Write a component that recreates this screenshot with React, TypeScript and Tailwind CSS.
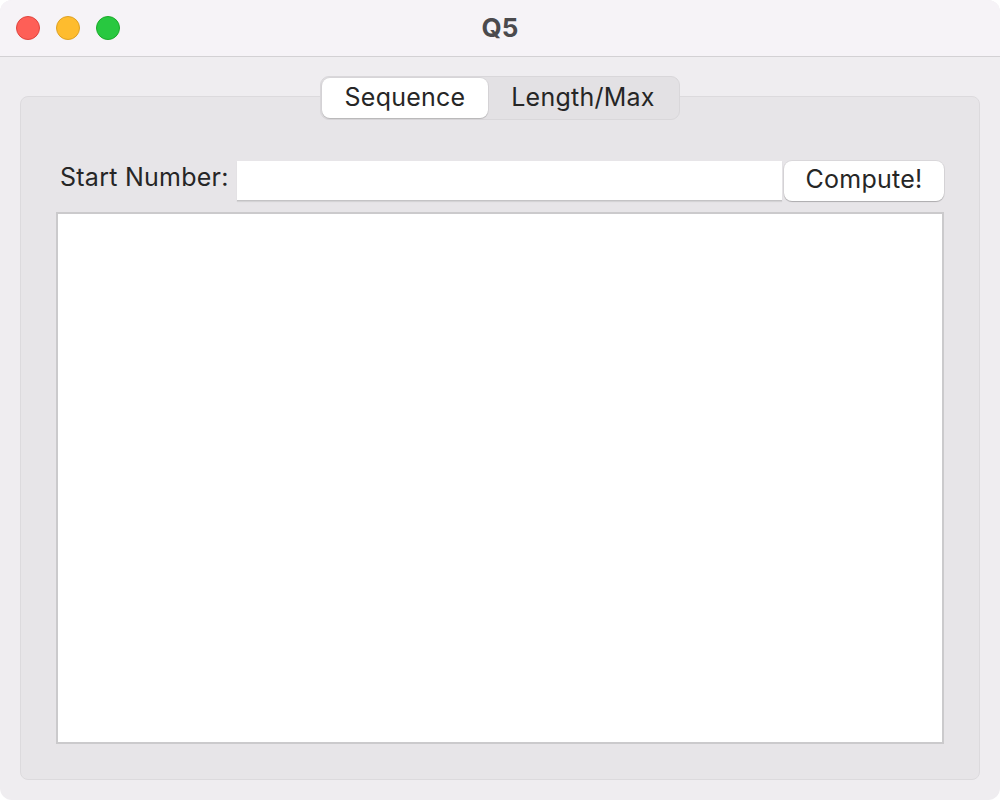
import React from "react";

const font = { fontFamily: '"Inter", "Liberation Sans", sans-serif' };

function TrafficLights() {
  return (
    <div className="absolute left-[16px] top-[16px] flex gap-[16px]">
      <span className="h-[24px] w-[24px] rounded-full bg-[#fe5f57] border border-[#e0443e]" />
      <span className="h-[24px] w-[24px] rounded-full bg-[#febc2e] border border-[#dea123]" />
      <span className="h-[24px] w-[24px] rounded-full bg-[#28c840] border border-[#1aab29]" />
    </div>
  );
}

export default function App() {
  return (
    <div className="h-[800px] w-[1000px] bg-white" style={font}>
      <div className="flex h-full w-full flex-col overflow-hidden rounded-[12px] bg-[#efedf0]">
        {/* title bar */}
        <div className="relative flex h-[57px] shrink-0 items-center justify-center border-b border-[#d3d1d4] bg-[#f6f3f7]">
          <TrafficLights />
          <span className="pb-[2px] text-[26px] font-bold text-[#4b4a4d]">Q5</span>
        </div>

        {/* body */}
        <div className="relative flex-1 px-[20px] pt-[39px] pb-[20px]">
          <div className="flex h-full flex-col rounded-[8px] border border-[#dcdadd] bg-[#e7e5e8] px-[35px] pt-[63px] pb-[35px]">
            <div className="flex h-[41px] items-center">
              <span className="w-[181px] shrink-0 pb-[6px] pl-[4px] text-[25px] tracking-[0.01em] text-[#262626]">Start Number:</span>
              <input className="h-[40px] flex-1 border-b border-[#c4c3c5] bg-white px-2 text-[22px] outline-none shadow-[0_1px_1px_rgba(0,0,0,0.08)]" />
              <button className="ml-[2px] h-[40px] w-[160px] rounded-[8px] bg-white pb-[3px] text-[25px] tracking-[0.01em] text-[#262626] shadow-[0_0_0_1px_rgba(0,0,0,0.06),0_1px_1px_rgba(0,0,0,0.2)]">
                Compute!
              </button>
            </div>
            <textarea className="mt-[11px] w-[888px] flex-1 resize-none border-2 border-[#cbcacc] bg-white outline-none" />
          </div>

          {/* segmented tabs */}
          <div className="absolute left-[320px] top-[19px] flex h-[44px] w-[360px] rounded-[9px] border border-[#d9d7da] bg-[#e3e1e4] p-[1px]">
            <div className="flex w-[166px] items-center justify-center rounded-[8px] bg-white pb-[1px] text-[25px] tracking-[0.01em] text-[#262626] shadow-[0_0_0_1px_rgba(0,0,0,0.05),0_1px_1px_rgba(0,0,0,0.15)]">
              Sequence
            </div>
            <div className="flex flex-1 items-center justify-center pb-[1px] text-[25px] tracking-[0.01em] text-[#262626]">
              Length/Max
            </div>
          </div>
        </div>
      </div>
    </div>
  );
}
